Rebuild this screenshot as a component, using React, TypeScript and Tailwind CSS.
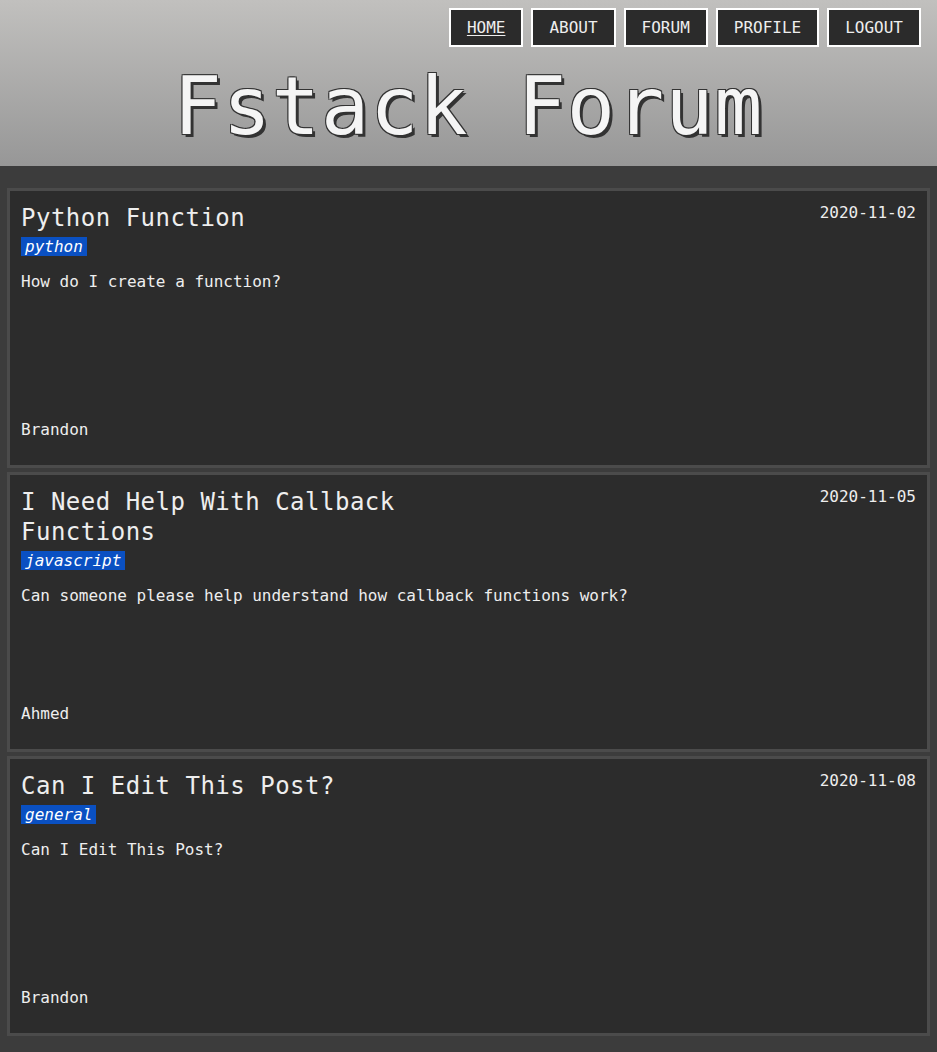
const navLinks = ['Home', 'About', 'Forum', 'Profile', 'Logout'];

const posts = [
  {
    title: 'Python Function',
    tag: 'python',
    body: 'How do I create a function?',
    author: 'Brandon',
    date: '2020-11-02',
  },
  {
    title: 'I Need Help With Callback Functions',
    tag: 'javascript',
    body: 'Can someone please help understand how callback functions work?',
    author: 'Ahmed',
    date: '2020-11-05',
  },
  {
    title: 'Can I Edit This Post?',
    tag: 'general',
    body: 'Can I Edit This Post?',
    author: 'Brandon',
    date: '2020-11-08',
  },
];

export default function App() {
  return (
    <div className="min-h-screen bg-[#3c3c3c] text-[#eeeeee] font-['DejaVu_Sans_Mono',monospace] text-[16px]">
      {/* header */}
      <header className="h-[166px] bg-gradient-to-b from-[#c1c0be] to-[#979797] flex flex-col">
        <nav className="flex justify-end gap-2 pt-2 pr-4">
          {navLinks.map((l, i) => (
            <a
              key={l}
              href="#"
              className={`border-2 border-white bg-[#2b2b2b] px-4 py-2 leading-[19px] uppercase text-[#eeeeee] ${i === 0 ? 'underline underline-offset-2' : ''}`}
            >
              {l}
            </a>
          ))}
        </nav>
        <h1 className="mt-[12px] text-center text-[80px] leading-[96px] tracking-[1px] text-[#f5f5f5] [text-shadow:-1px_-1px_0_#333,1px_-1px_0_#333,-1px_1px_0_#333,1px_1px_0_#333,3px_3px_0_#333]">
          Fstack Forum
        </h1>
      </header>

      {/* posts */}
      <main className="flex flex-col gap-[4px] px-[7px] pt-[22px] pb-4">
        {posts.map((p) => (
          <article
            key={p.date}
            className="h-[280px] flex flex-col bg-[#2c2c2c] border-[3px] border-[#4b4b4b] px-[11px] pt-3 pb-[26px]"
          >
            <div className="flex-1">
              <div className="flex justify-between items-start">
                <h2 className="w-1/2 text-[24px] leading-[30px] tracking-[0.5px]">{p.title}</h2>
                <span className="leading-[19px]">{p.date}</span>
              </div>
              <span className="inline-block mt-1 bg-[#0a50c2] px-1 italic leading-[19px] text-white">{p.tag}</span>
              <p className="mt-[13px] leading-[19px]">{p.body}</p>
            </div>
            <p className="leading-[19px]">{p.author}</p>
          </article>
        ))}
      </main>
    </div>
  );
}
